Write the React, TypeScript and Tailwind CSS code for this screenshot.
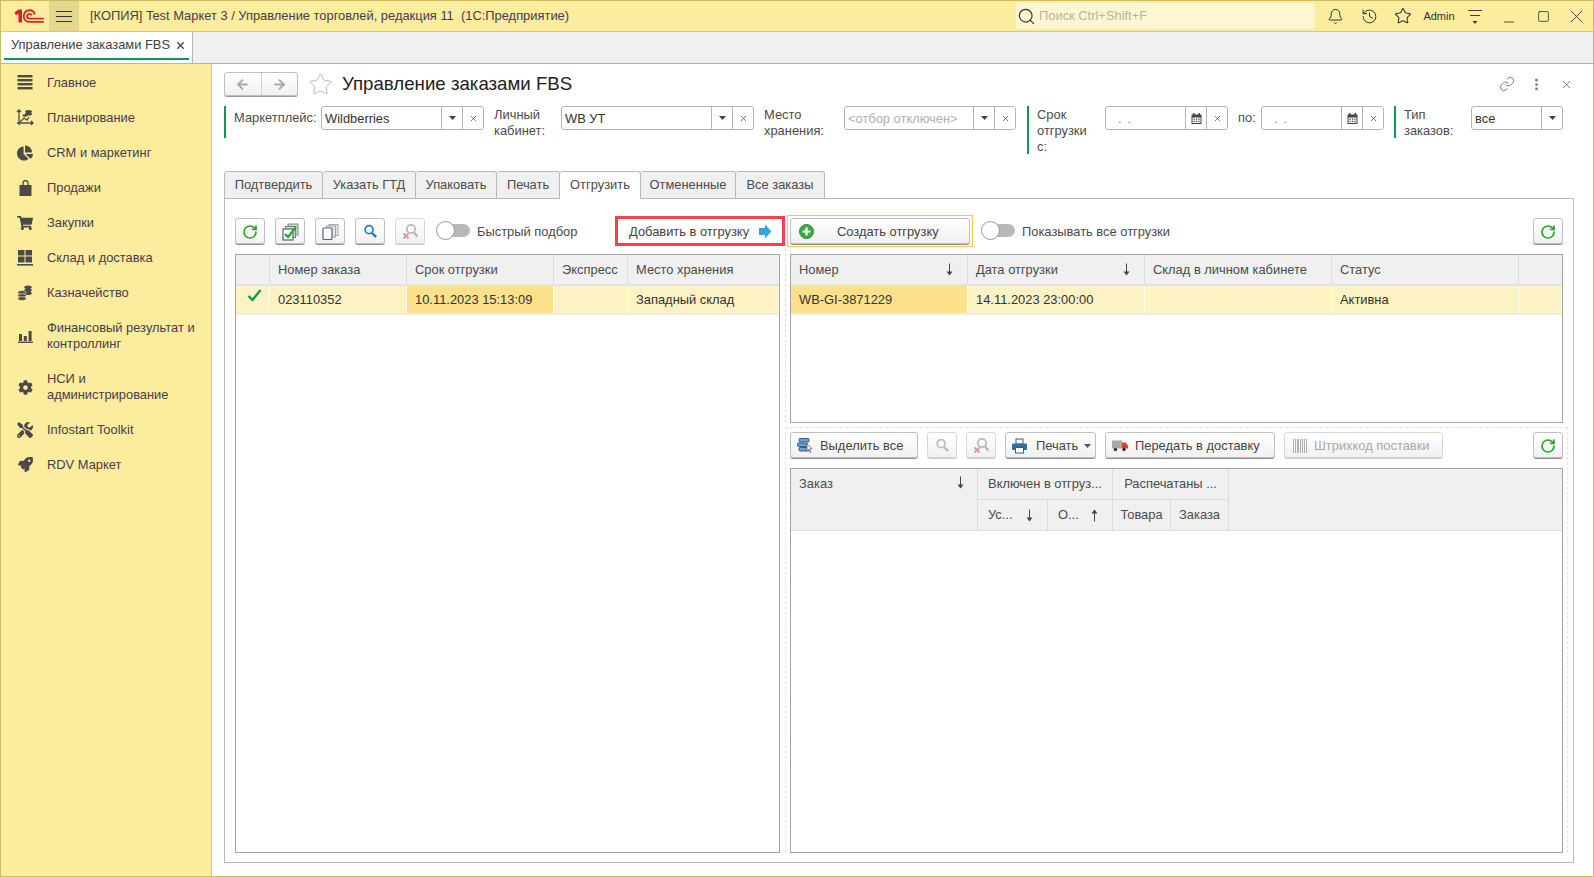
import React from "react";
import { ArrowLeft, ArrowRight, Bell, History, Link as LinkIcon, Minus, MoreVertical, RotateCw, Search, Square, Star, X } from "lucide-react";
import { FaChartPie, FaCog, FaRocket, FaShoppingCart, FaTools } from "react-icons/fa";

type Kids = { children?: React.ReactNode };

function MenuLines() {
  return (
    <svg width="16" height="15" viewBox="0 0 16 15" fill="#4a4a4a">
      <rect x="0.500" y="0" width="15" height="2.400" />
      <rect x="0.500" y="4" width="15" height="2.400" />
      <rect x="0.500" y="8" width="15" height="2.400" />
      <rect x="0.500" y="12" width="15" height="2.400" />
    </svg>
  );
}

function PlanIcon() {
  return (
    <svg width="18" height="18" viewBox="0 0 18 18" fill="none" stroke="#4a4a4a" strokeWidth="1.300">
      <path d="M3 1v15M1 3l2-2 2 2M1 14h16M15 12l2 2-2 2" />
      <path d="M4 13l4-4 3 2 2-3" />
      <ellipse cx="12.500" cy="2.500" rx="3.500" ry="1.600" fill="#4a4a4a" stroke="none" />
      <ellipse cx="12.500" cy="5" rx="3.500" ry="1.600" fill="#4a4a4a" stroke="none" />
      <ellipse cx="9" cy="6.500" rx="2.500" ry="1.300" fill="#4a4a4a" stroke="none" />
    </svg>
  );
}

function GridIcon() {
  return (
    <svg width="16" height="16" viewBox="0 0 16 16" fill="#4a4a4a">
      <rect x="1" y="0" width="6.500" height="5.500" />
      <rect x="8.500" y="0" width="6.500" height="5.500" />
      <rect x="1" y="6.500" width="6.500" height="6" />
      <rect x="8.500" y="6.500" width="6.500" height="6" />
      <rect x="0" y="14" width="16" height="1.600" />
    </svg>
  );
}

function CoinsIcon() {
  return (
    <svg width="16" height="16" viewBox="0 0 16 16" fill="#4a4a4a">
      <ellipse cx="11" cy="2.200" rx="3.800" ry="1.800" />
      <ellipse cx="11" cy="5.200" rx="3.800" ry="1.800" />
      <ellipse cx="11" cy="8.200" rx="3.800" ry="1.800" />
      <ellipse cx="5" cy="7.500" rx="4.200" ry="1.900" stroke="#fbec9e" strokeWidth="0.600" />
      <ellipse cx="5" cy="10.600" rx="4.200" ry="1.900" stroke="#fbec9e" strokeWidth="0.600" />
      <ellipse cx="5" cy="13.600" rx="4.200" ry="1.900" stroke="#fbec9e" strokeWidth="0.600" />
    </svg>
  );
}

function BarsIcon() {
  return (
    <svg width="15" height="13" viewBox="0 0 15 13" fill="#4a4a4a">
      <rect x="1" y="4" width="3" height="7" />
      <rect x="5.800" y="6" width="3" height="5" />
      <rect x="10.600" y="1" width="3" height="10" />
      <rect x="0" y="11.600" width="15" height="1.400" />
    </svg>
  );
}

function BagIcon() {
  return (
    <svg width="13" height="16" viewBox="0 0 13 16" fill="#4a4a4a">
      <path d="M0.500 5h12v11h-12z" />
      <path d="M4 7V3a2.500 2.500 0 0 1 5 0v4" fill="none" stroke="#4a4a4a" strokeWidth="1.300" />
    </svg>
  );
}

function Logo() {
  return (
    <svg width="30" height="14" viewBox="0 0 30 14" fill="none">
      <path d="M0.500 3.500L4.500 0.500H8V13.500H4.500V4.500L2 6.200z" fill="#d8232a" />
      <path d="M20.800 5.400C20 2.800 18 1.300 15.600 1.300 12.200 1.300 9.700 3.800 9.700 7.200c0 3.400 2.500 5.700 5.900 5.700H29.800" stroke="#d8232a" strokeWidth="1.900" />
      <path d="M17.800 6.400c-.5-1-1.200-1.500-2.200-1.500-1.400 0-2.500 1-2.500 2.400s1.100 2.300 2.500 2.300H29.800" stroke="#d8232a" strokeWidth="1.900" />
    </svg>
  );
}

function HamburgerDown() {
  return (
    <svg width="16" height="17" viewBox="0 0 16 17" fill="none" stroke="#3f3f3f">
      <path d="M1 2.500h14M3 7.500h10" strokeWidth="1.200" />
      <path d="M5.500 13h5l-2.500 3z" fill="#3f3f3f" stroke="none" />
    </svg>
  );
}

function CheckStack() {
  return (
    <svg width="20" height="20" viewBox="0 0 20 20" fill="none">
      <rect x="8" y="2" width="10" height="11" fill="#c9d6c3" stroke="#7f8f86" />
      <rect x="5.500" y="4.500" width="10" height="11" fill="#d6e3d0" stroke="#6f8078" />
      <rect x="3" y="7" width="10" height="11" fill="#fff" stroke="#4b6a74" strokeWidth="1.200" />
      <path d="M5 12l3 3 8-10" stroke="#2aa52a" strokeWidth="2.200" />
    </svg>
  );
}

function Stack() {
  return (
    <svg width="18" height="18" viewBox="0 0 18 18" fill="none">
      <rect x="8" y="1.500" width="9" height="11" fill="#e8e8e8" stroke="#a8a8a8" />
      <rect x="5.500" y="3" width="9" height="11" fill="#e8e8e8" stroke="#a0a0a0" />
      <rect x="2" y="5" width="9" height="11.500" rx="1" fill="#fff" stroke="#4b6a74" strokeWidth="1.200" />
    </svg>
  );
}

function Magnifier({ color = "#1f7fb8" }: { color?: string }) {
  return (
    <svg width="15" height="15" viewBox="0 0 16 16" fill="none" stroke={color}>
      <circle cx="6.500" cy="6" r="4.200" strokeWidth="1.800" />
      <path d="M9.500 9.500l4.500 4.500" strokeWidth="2.400" />
    </svg>
  );
}

function MagnifierX() {
  return (
    <svg width="18" height="18" viewBox="0 0 18 18" fill="none">
      <circle cx="10" cy="6" r="4.200" stroke="#b8b8b8" strokeWidth="1.800" />
      <path d="M13 9.500l3.500 4" stroke="#b8b8b8" strokeWidth="2.400" />
      <path d="M2.500 10.500l5 5M7.500 10.500l-5 5" stroke="#cf9b9b" strokeWidth="1.800" />
    </svg>
  );
}

function SelectIcon() {
  return (
    <svg width="18" height="18" viewBox="0 0 18 18" fill="none">
      <rect x="3" y="1.500" width="10" height="3.500" rx="1" fill="#6f9fc8" stroke="#34618c" />
      <rect x="1.500" y="6" width="10" height="3.500" rx="1" fill="#6f9fc8" stroke="#34618c" />
      <rect x="3" y="10.500" width="10" height="3.500" rx="1" fill="#6f9fc8" stroke="#34618c" />
      <path d="M11 7l5 4.500-2.200.3 1.200 3-1.300.5-1.200-3-1.500 1.500z" fill="#fff" stroke="#555" strokeWidth="0.700" />
    </svg>
  );
}

function Printer() {
  return (
    <svg width="17" height="16" viewBox="0 0 17 16" fill="none">
      <rect x="5" y="1" width="7" height="5" fill="#fff" stroke="#2e5f86" />
      <rect x="1" y="5.500" width="15" height="6.500" rx="1" fill="#2e6f9e" />
      <rect x="4.500" y="9.500" width="8" height="5.500" fill="#fff" stroke="#2e5f86" />
    </svg>
  );
}

function Truck() {
  return (
    <svg width="18" height="13" viewBox="0 0 18 13" fill="none">
      <rect x="1" y="1.500" width="10" height="8" fill="#a8a8a8" />
      <path d="M11 3.500h3.500l2.500 3v3h-6z" fill="#d8402c" />
      <circle cx="4.500" cy="10.500" r="1.700" fill="#333" />
      <circle cx="13" cy="10.500" r="1.700" fill="#333" />
    </svg>
  );
}

function Barcode() {
  return (
    <svg width="14" height="14" viewBox="0 0 14 14" fill="#b0b0b0">
      <rect x="0" y="0" width="1" height="14" />
      <rect x="2" y="0" width="1" height="14" />
      <rect x="4" y="0" width="2" height="14" />
      <rect x="7" y="0" width="1" height="14" />
      <rect x="9" y="0" width="1" height="14" />
      <rect x="11" y="0" width="1" height="14" />
      <rect x="13" y="0" width="1" height="14" />
    </svg>
  );
}

function BlueArrow() {
  return (
    <svg width="14" height="15" viewBox="0 0 14 15" fill="#3aa0e0">
      <path d="M1 4h6V0.500L13.500 7.500 7 14.500V11H1z" />
    </svg>
  );
}

function PlusCircle() {
  return (
    <svg width="15" height="15" viewBox="0 0 15 15">
      <circle cx="7.500" cy="7.500" r="7" fill="#3fa84a" stroke="#2b8a38" />
      <path d="M7.500 3.500v8M3.500 7.500h8" stroke="#fff" strokeWidth="2.200" />
    </svg>
  );
}

function CalendarIcon() {
  return (
    <svg width="11" height="11" viewBox="0 0 11 11" fill="#444">
      <rect x="2" y="0" width="1.500" height="2" />
      <rect x="7.500" y="0" width="1.500" height="2" />
      <path d="M0.500 1.500h10v9.500h-10zM1.500 4.500v5.500h8V4.500z" fillRule="evenodd" />
      <rect x="2.500" y="5.500" width="1.300" height="1.300" />
      <rect x="4.900" y="5.500" width="1.300" height="1.300" />
      <rect x="7.300" y="5.500" width="1.300" height="1.300" />
      <rect x="2.500" y="7.800" width="1.300" height="1.300" />
      <rect x="4.900" y="7.800" width="1.300" height="1.300" />
      <rect x="7.300" y="7.800" width="1.300" height="1.300" />
    </svg>
  );
}

function SortArrow({ up, cls = "" }: { up?: boolean; cls?: string }) {
  return (
    <svg width="9" height="13" viewBox="0 0 9 13" fill="#444" className={`shrink-0 ${up ? "rotate-180" : ""} ${cls}`}>
      <rect x="4" y="0.500" width="1" height="10" />
      <path d="M1.500 8.500h6L4.500 12.500z" />
    </svg>
  );
}

function Refresh() {
  return <RotateCw size={16} strokeWidth={2.600} color="#2ca52c" />;
}

function SidebarItem({ icon, label, h }: { icon: React.ReactNode; label: React.ReactNode; h: string }) {
  return (
    <div className={`flex items-center ${h}`}>
      <div className="flex w-[46px] shrink-0 items-center justify-center pl-[2px]">{icon}</div>
      <div className="leading-4 text-[#4a3b4b]">{label}</div>
    </div>
  );
}

function Sidebar() {
  const c = "#4a4a4a";
  return (
    <aside className="w-[211px] shrink-0 border-r border-[#d9c877] bg-[#fbec9e] pt-[1px]">
      <SidebarItem h="h-[35px]" icon={<MenuLines />} label="Главное" />
      <SidebarItem h="h-[35px]" icon={<PlanIcon />} label="Планирование" />
      <SidebarItem h="h-[35px]" icon={<FaChartPie size={16} color={c} />} label="CRM и маркетинг" />
      <SidebarItem h="h-[35px]" icon={<BagIcon />} label="Продажи" />
      <SidebarItem h="h-[35px]" icon={<FaShoppingCart size={16} color={c} />} label="Закупки" />
      <SidebarItem h="h-[35px]" icon={<GridIcon />} label="Склад и доставка" />
      <SidebarItem h="h-[35px]" icon={<CoinsIcon />} label="Казначейство" />
      <SidebarItem h="h-[52px]" icon={<BarsIcon />} label={<>Финансовый результат и<br />контроллинг</>} />
      <SidebarItem h="h-[50px]" icon={<FaCog size={15} color={c} />} label={<>НСИ и<br />администрирование</>} />
      <SidebarItem h="h-[35px]" icon={<FaTools size={16} color={c} />} label="Infostart Toolkit" />
      <SidebarItem h="h-[35px]" icon={<FaRocket size={15} color={c} />} label="RDV Маркет" />
    </aside>
  );
}

function TitleBar() {
  return (
    <header className="flex h-[31px] shrink-0 items-center border-b border-[#d9c877] bg-[#fbec9e] text-[#4a3b4b]">
      <div className="ml-[13px] flex w-[35px] items-center"><Logo /></div>
      <div className="flex h-full w-[30px] items-center justify-center bg-[#e4d78e]">
        <div className="flex flex-col gap-[4px]">
          <div className="h-px w-[16px] bg-[#333]" />
          <div className="h-px w-[16px] bg-[#333]" />
          <div className="h-px w-[16px] bg-[#333]" />
        </div>
      </div>
      <div className="ml-[11px] min-w-0 flex-1 whitespace-pre">[КОПИЯ] Test Маркет 3 / Управление торговлей, редакция 11  (1С:Предприятие)</div>
      <div className="flex h-[26px] w-[299px] items-center rounded-[3px] bg-[#fdf6d0] pl-[1px]">
        <Search size={19} strokeWidth={1.500} color="#333" />
        <span className="ml-[3px] text-[#b9b39c]">Поиск Ctrl+Shift+F</span>
      </div>
      <div className="ml-[3px] flex w-[34px] justify-center"><Bell size={17} strokeWidth={1.400} color="#333" /></div>
      <div className="flex w-[34px] justify-center"><History size={17} strokeWidth={1.400} color="#333" /></div>
      <div className="flex w-[34px] justify-center"><Star size={18} strokeWidth={1.400} color="#333" /></div>
      <div className="flex w-[38px] justify-center text-[11px] text-[#333]">Admin</div>
      <div className="flex w-[34px] justify-center"><HamburgerDown /></div>
      <div className="flex w-[34px] items-end justify-center pt-[11px]"><Minus size={16} strokeWidth={1.300} color="#333" /></div>
      <div className="flex w-[34px] justify-center"><Square size={13} strokeWidth={1.500} color="#333" /></div>
      <div className="flex w-[33px] justify-center"><X size={21} strokeWidth={1} color="#333" /></div>
    </header>
  );
}

function TabBar() {
  return (
    <div className="flex h-[32px] shrink-0 border-b border-[#b4b4b4] bg-[#f0f0f0]">
      <div className="flex w-[192px] flex-col border-r border-[#b4b4b4] bg-white pl-[3px] pr-[3px]">
        <div className="flex flex-1 items-center justify-between border-b-2 border-[#0b9a50] pl-[7px] pr-[3px] text-[#3f3f3f]">
          <span>Управление заказами FBS</span>
          <X size={11} strokeWidth={3} color="#444" />
        </div>
        <div className="h-[3px]" />
      </div>
    </div>
  );
}

function Field({ w, children, buttons, dim }: Kids & { w: string; buttons: React.ReactNode; dim?: boolean }) {
  return (
    <div className={`flex h-[24px] shrink-0 items-center rounded-[3px] border border-[#b4b4b4] bg-white ${w}`}>
      <div className={`min-w-0 flex-1 truncate pl-[3px] pt-px ${dim ? "text-[#b0b0b0]" : "text-[#333]"}`}>{children}</div>
      {buttons}
    </div>
  );
}

function Cell({ children }: Kids) {
  return <div className="flex h-full w-[21px] shrink-0 items-center justify-center border-l border-[#b4b4b4]">{children}</div>;
}

const DropBtn = () => <Cell><svg width="7" height="4" viewBox="0 0 7 4"><path d="M0 0h7L3.500 4z" fill="#444" /></svg></Cell>;
const ClearBtn = () => <Cell><X size={9} strokeWidth={2.200} color="#555" /></Cell>;
const CalBtn = () => <Cell><CalendarIcon /></Cell>;

function Bar({ h }: { h: string }) {
  return <div className={`w-[2px] shrink-0 bg-[#0b9a50] ${h}`} />;
}

function Label({ w, children, cls = "" }: Kids & { w: string; cls?: string }) {
  return <div className={`shrink-0 leading-4 text-[#4b4b4b] ${w} ${cls}`}>{children}</div>;
}

function Filters() {
  return (
    <div className="mt-[10px] flex h-[65px] shrink-0 items-start">
      <Bar h="h-[32px]" />
      <Label w="w-[87px]" cls="ml-[8px] pt-[4px]">Маркетплейс:</Label>
      <Field w="w-[163px]" buttons={<><DropBtn /><ClearBtn /></>}>Wildberries</Field>
      <Label w="w-[67px]" cls="ml-[10px] pt-px">Личный<br />кабинет:</Label>
      <Field w="w-[193px]" buttons={<><DropBtn /><ClearBtn /></>}>WB УТ</Field>
      <Label w="w-[80px]" cls="ml-[10px] pt-px">Место<br />хранения:</Label>
      <Field w="w-[172px]" dim buttons={<><DropBtn /><ClearBtn /></>}>&lt;отбор отключен&gt;</Field>
      <div className="ml-[11px]"><Bar h="h-[48px]" /></div>
      <Label w="w-[68px]" cls="ml-[8px] pt-px">Срок<br />отгрузки<br />с:</Label>
      <Field w="w-[123px]" buttons={<><CalBtn /><ClearBtn /></>}><span className="pl-[9px] tracking-[6px] text-[#888]">..</span></Field>
      <Label w="w-[23px]" cls="ml-[10px] pt-[4px]">по:</Label>
      <Field w="w-[123px]" buttons={<><CalBtn /><ClearBtn /></>}><span className="pl-[9px] tracking-[6px] text-[#888]">..</span></Field>
      <div className="ml-[10px]"><Bar h="h-[32px]" /></div>
      <Label w="w-[67px]" cls="ml-[8px] pt-px">Тип<br />заказов:</Label>
      <Field w="w-[92px]" buttons={<DropBtn />}>все</Field>
    </div>
  );
}

function Tabs() {
  const tabs: [string, string, boolean][] = [
    ["Подтвердить", "w-[99px] border-l", false],
    ["Указать ГТД", "w-[93px]", false],
    ["Упаковать", "w-[81px]", false],
    ["Печать", "w-[63px]", false],
    ["Отгрузить", "w-[81px]", true],
    ["Отмененные", "w-[95px]", false],
    ["Все заказы", "w-[89px]", false],
  ];
  return (
    <div className="relative z-10 -mb-px flex h-[28px] shrink-0 items-end">
      {tabs.map(([t, w, active]) => (
        <div
          key={t}
          className={`flex h-[28px] shrink-0 items-center justify-center rounded-t-[3px] border-y border-r border-[#b8b8b8] text-[#4b4b4b] ${w} ${
            active ? "border-b-white bg-white" : "bg-[#f0f0f0]"
          }`}
        >
          {t}
        </div>
      ))}
    </div>
  );
}

function Btn({ w, children, disabled, cls = "" }: Kids & { w: string; disabled?: boolean; cls?: string }) {
  return (
    <div
      className={`flex h-[26px] shrink-0 items-center rounded-[3px] border bg-gradient-to-b from-white to-[#f1f1f1] pt-px ${w} ${cls} ${
        disabled
          ? "border-[#d8d8d8] text-[#a8a8a8] shadow-[0_1px_0_#c8c8c8]"
          : "border-[#bfbfbf] text-[#444] shadow-[0_1px_0_#8f8f8f]"
      }`}
    >
      {children}
    </div>
  );
}

function IconBtn({ children, disabled }: Kids & { disabled?: boolean }) {
  return <Btn w="w-[30px]" disabled={disabled} cls="justify-center">{children}</Btn>;
}

function Toggle({ label }: { label: string }) {
  return (
    <div className="flex items-center">
      <div className="relative z-10 h-[19px] w-[19px] rounded-full border border-[#9a9a9a] bg-white" />
      <div className="-ml-[6px] h-[13px] w-[21px] rounded-r-full bg-[#b8b8b8]" />
      <span className="ml-[7px] pt-px text-[#4b4b4b]">{label}</span>
    </div>
  );
}

function Th({ w, children, sort, cls = "" }: Kids & { w: string; sort?: "up" | "down"; cls?: string }) {
  return (
    <div className={`flex h-full shrink-0 items-center justify-between whitespace-nowrap border-r border-[#dcdcdc] pl-[8px] pr-[13px] text-[#4b4b4b] ${w} ${cls}`}>
      <span>{children}</span>
      {sort === "down" && <SortArrow />}
      {sort === "up" && <SortArrow up />}
    </div>
  );
}

function Td({ w, children, sel }: Kids & { w: string; sel?: boolean }) {
  return (
    <div className={`flex h-full shrink-0 items-center border-r border-[#fffdf0] pl-[8px] text-[#333] ${w} ${sel ? "bg-[#fce08b]" : ""}`}>
      {children}
    </div>
  );
}

function LeftPane() {
  return (
    <div className="flex w-[545px] shrink-0 flex-col">
      <div className="flex h-[26px] shrink-0 items-center gap-[10px]">
        <IconBtn><Refresh /></IconBtn>
        <IconBtn><CheckStack /></IconBtn>
        <IconBtn><Stack /></IconBtn>
        <IconBtn><Magnifier /></IconBtn>
        <IconBtn disabled><MagnifierX /></IconBtn>
        <div className="ml-px"><Toggle label="Быстрый подбор" /></div>
        <div className="relative z-10 -mr-[5px] ml-auto flex h-[30px] w-[170px] shrink-0 items-center border-[3px] border-[#f4424a] bg-white pl-[11px] pr-[10px] pt-px text-[#444]">
          <span className="flex-1">Добавить в отгрузку</span>
          <BlueArrow />
        </div>
      </div>
      <div className="mt-[10px] flex min-h-0 flex-1 flex-col border border-[#a4a4a4]">
        <div className="flex h-[31px] shrink-0 border-b-2 border-[#e4e4e4] bg-[#f0f0f0]">
          <Th w="w-[34px]" />
          <Th w="w-[137px]">Номер заказа</Th>
          <Th w="w-[147px]">Срок отгрузки</Th>
          <Th w="w-[74px]">Экспресс</Th>
          <Th w="flex-1" cls="border-r-0">Место хранения</Th>
        </div>
        <div className="flex h-[29px] shrink-0 border-b-2 border-[#ececec] bg-[#fdf2c4]">
          <div className="flex h-full w-[34px] shrink-0 items-start justify-center border-r border-[#fffdf0] pl-[4px] pt-[3px]">
            <svg width="15" height="13" viewBox="0 0 15 13" fill="none"><path d="M1.500 7l4 4L13.500 1" stroke="#0e9a50" strokeWidth="2.400" /></svg>
          </div>
          <Td w="w-[137px]">023110352</Td>
          <Td w="w-[147px]" sel>10.11.2023 15:13:09</Td>
          <Td w="w-[74px]" />
          <Td w="flex-1">Западный склад</Td>
        </div>
      </div>
    </div>
  );
}

function UpperRight() {
  return (
    <div className="flex h-[205px] shrink-0 flex-col border-l border-dashed border-[#dcdcdc] pl-[4px] pr-[5px]">
      <div className="flex h-[26px] shrink-0 items-center">
        <div className="relative z-10 -my-[4px] -ml-[3px] flex border border-[#f5c842] bg-white p-[2px]">
          <Btn w="w-[180px]" cls="pl-[8px]">
            <PlusCircle />
            <span className="ml-[23px]">Создать отгрузку</span>
          </Btn>
        </div>
        <div className="ml-[8px]"><Toggle label="Показывать все отгрузки" /></div>
        <div className="ml-auto"><IconBtn><Refresh /></IconBtn></div>
      </div>
      <div className="mt-[10px] flex min-h-0 flex-1 flex-col border border-[#a4a4a4]">
        <div className="flex h-[31px] shrink-0 border-b-2 border-[#e4e4e4] bg-[#f0f0f0]">
          <Th w="w-[177px]" sort="down">Номер</Th>
          <Th w="w-[177px]" sort="down">Дата отгрузки</Th>
          <Th w="w-[187px]">Склад в личном кабинете</Th>
          <Th w="w-[187px]">Статус</Th>
          <Th w="flex-1" cls="border-r-0" />
        </div>
        <div className="flex h-[29px] shrink-0 border-b-2 border-[#ececec] bg-[#fdf2c4]">
          <Td w="w-[177px]" sel>WB-GI-3871229</Td>
          <Td w="w-[177px]">14.11.2023 23:00:00</Td>
          <Td w="w-[187px]" />
          <Td w="w-[187px]">Активна</Td>
          <Td w="flex-1" />
        </div>
      </div>
    </div>
  );
}

function LowerRight() {
  return (
    <div className="mt-[4px] flex min-h-0 flex-1 flex-col border-l border-r border-t border-dashed border-[#e4e4e4] pl-[4px] pr-[4px] pt-[4px]">
      <div className="flex h-[26px] shrink-0 items-center gap-[9px]">
        <Btn w="w-[128px]" cls="pl-[5px]"><SelectIcon /><span className="ml-[6px]">Выделить все</span></Btn>
        <IconBtn disabled><Magnifier color="#bdbdbd" /></IconBtn>
        <IconBtn disabled><MagnifierX /></IconBtn>
        <Btn w="w-[91px]" cls="pl-[5px]">
          <Printer />
          <span className="ml-[8px]">Печать</span>
          <svg className="ml-[6px]" width="7" height="4" viewBox="0 0 7 4"><path d="M0 0h7L3.500 4z" fill="#555" /></svg>
        </Btn>
        <Btn w="w-[170px]" cls="pl-[5px]"><Truck /><span className="ml-[6px]">Передать в доставку</span></Btn>
        <Btn w="w-[159px]" disabled cls="pl-[8px]"><Barcode /><span className="ml-[7px]">Штрихкод поставки</span></Btn>
        <div className="ml-auto"><IconBtn><Refresh /></IconBtn></div>
      </div>
      <div className="mt-[10px] flex min-h-0 flex-1 flex-col border border-[#a4a4a4]">
        <div className="flex h-[62px] shrink-0 border-b border-[#dcdcdc] bg-[#f0f0f0]">
          <div className="flex h-full w-[187px] shrink-0 items-start justify-between border-r border-[#dcdcdc] pl-[8px] pr-[12px] pt-[5px] text-[#4b4b4b]">
            <span>Заказ</span>
            <SortArrow cls="mt-[2px]" />
          </div>
          <div className="flex h-full w-[135px] shrink-0 flex-col">
            <div className="flex h-[31px] shrink-0 items-center justify-center border-b border-r border-[#dcdcdc] text-[#4b4b4b]">Включен в отгруз...</div>
            <div className="flex flex-1">
              <Th w="w-[70px]" sort="down" cls="!pl-[10px]">Ус...</Th>
              <Th w="w-[65px]" sort="up" cls="!pl-[10px]">О...</Th>
            </div>
          </div>
          <div className="flex h-full w-[116px] shrink-0 flex-col">
            <div className="flex h-[31px] shrink-0 items-center justify-center border-b border-r border-[#dcdcdc] text-[#4b4b4b]">Распечатаны ...</div>
            <div className="flex flex-1">
              <Th w="w-[58px]" cls="justify-center !px-0">Товара</Th>
              <Th w="w-[58px]" cls="justify-center !px-0">Заказа</Th>
            </div>
          </div>
        </div>
      </div>
    </div>
  );
}

function Panel() {
  return (
    <div className="flex min-h-0 flex-1 border border-[#b8b8b8] bg-white pb-[9px] pl-[10px] pr-[5px] pt-[19px]">
      <LeftPane />
      <div className="ml-[5px] flex min-w-0 flex-1 flex-col">
        <UpperRight />
        <LowerRight />
      </div>
    </div>
  );
}

function Main() {
  return (
    <main className="flex min-w-0 flex-1 flex-col bg-white pb-[13px] pl-[12px] pr-[19px] pt-[8px]">
      <div className="flex h-[24px] shrink-0 items-center">
        <div className="flex h-[24px] w-[74px] shrink-0 rounded-[3px] border border-[#bfbfbf] bg-gradient-to-b from-white to-[#f1f1f1] shadow-[0_1px_0_#9a9a9a]">
          <div className="flex flex-1 items-center justify-center border-r border-[#cfcfcf]"><ArrowLeft size={15} strokeWidth={3} color="#a9a9a9" /></div>
          <div className="flex flex-1 items-center justify-center"><ArrowRight size={15} strokeWidth={3} color="#a9a9a9" /></div>
        </div>
        <Star size={25} strokeWidth={0.900} color="#b5b5b5" className="ml-[10px] shrink-0" />
        <div className="ml-[9px] flex-1 text-[18.670px] text-[#222]">Управление заказами FBS</div>
        <LinkIcon size={16} strokeWidth={1.300} color="#666" className="mr-[14px]" />
        <MoreVertical size={15} strokeWidth={2.400} color="#777" className="mr-[16px]" />
        <X size={13} strokeWidth={1.500} color="#666" className="mr-[1px]" />
      </div>
      <Filters />
      <Tabs />
      <Panel />
    </main>
  );
}

export default function App() {
  return (
    <div className="flex h-[877px] w-[1594px] flex-col overflow-hidden border border-[#cdb961] bg-white font-['Liberation_Sans',Arial,sans-serif] text-[12.900px]">
      <TitleBar />
      <TabBar />
      <div className="flex min-h-0 flex-1">
        <Sidebar />
        <Main />
      </div>
    </div>
  );
}
